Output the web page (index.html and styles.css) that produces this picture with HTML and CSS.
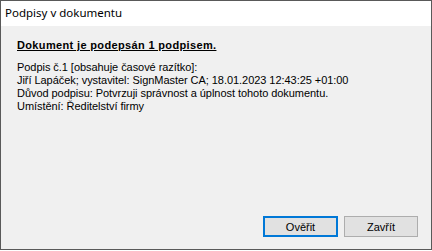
FILE: index.html
```html
<!DOCTYPE html>
<html>

<head>
    <meta charset="utf-8" />
    <title>Podpisy v dokumentu</title>
    <link rel="stylesheet" href="styles.css">
</head>

<body>
    <div class="window">
        <div class="titlebar">Podpisy v dokumentu</div>
        <div class="content">
            <h1>Dokument je podepsán 1 podpisem.</h1>
            <div class="details">
                <p>Podpis č.1 [obsahuje časové razítko]:</p>
                <p>Jiří Lapáček; vystavitel: SignMaster CA; 18.01.2023 12:43:25 +01:00</p>
                <p>Důvod podpisu: Potvrzuji správnost a úplnost tohoto dokumentu.</p>
                <p>Umístění: Ředitelství firmy</p>
            </div>
            <div class="buttons">
                <button class="default">Ověřit</button>
                <button>Zavřít</button>
            </div>
        </div>
    </div>
</body>

</html>
```

FILE: styles.css
```css
* {
    box-sizing: border-box;
    padding: 0;
    margin: 0;
}

body {
    width: 432px;
    height: 251px;
    font-family: "Liberation Sans", Arial, sans-serif;
    font-size: 11px;
    color: #000;
    background: #fff;
}

.window {
    width: 432px;
    height: 250px;
    border: 1px solid #595959;
    display: flex;
    flex-direction: column;
}

.titlebar {
    height: 25px;
    background: #fff;
    font-family: "Noto Sans", sans-serif;
    font-size: 11.5px;
    line-height: 24px;
    padding-left: 4px;
}

.content {
    flex: 1;
    background: #f0f0f0;
    display: flex;
    flex-direction: column;
    padding: 13px 13px 12px 16px;
}

h1 {
    font-size: 11px;
    font-weight: bold;
    text-decoration: underline;
    line-height: 13px;
    letter-spacing: 0.35px;
}

.details {
    margin-top: 9px;
    line-height: 13px;
    letter-spacing: -0.05px;
}

.buttons {
    margin-top: auto;
    display: flex;
    justify-content: flex-end;
    gap: 6px;
}

button {
    width: 74px;
    height: 21px;
    font-family: "Liberation Sans", Arial, sans-serif;
    font-size: 11px;
    color: #000;
    background: #e1e1e1;
    border: 1px solid #adadad;
}

button.default {
    width: 75px;
    border: 2px solid #0078d7;
}
```
